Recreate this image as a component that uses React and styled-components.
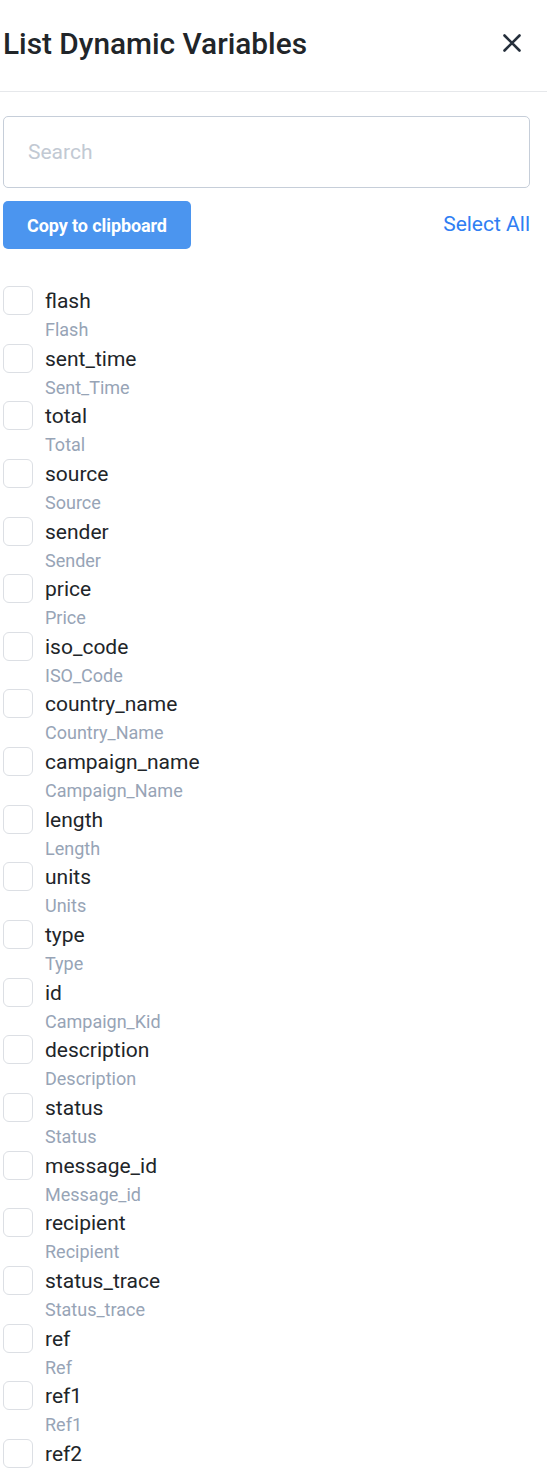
import { useState } from 'react'
import styled, { createGlobalStyle } from 'styled-components'

const GlobalStyle = createGlobalStyle`
  body {
    margin: 0;
    background: #fff;
    font-family: Roboto, "Liberation Sans", sans-serif;
    color: #212529;
  }
`

const Panel = styled.div`
  width: 547px;
  height: 1475px;
  overflow: hidden;
`

const Header = styled.div`
  height: 86px;
  padding: 0 26px 5px 3px;
  display: flex;
  align-items: center;
  justify-content: space-between;
  border-bottom: 1px solid #e6e8eb;
`

const Title = styled.h2`
  margin: 0;
  font-size: 29.8px;
  font-weight: 500;
  color: #212529;
`

const CloseButton = styled.button`
  border: 0;
  background: none;
  padding: 0;
  width: 18px;
  height: 18px;
  display: flex;
  cursor: pointer;
`

const Body = styled.div`
  padding: 24px 17px 0 3px;
`

const SearchInput = styled.input`
  box-sizing: border-box;
  width: 100%;
  height: 72px;
  border: 1px solid #c6ced9;
  border-radius: 5px;
  padding: 0 24px;
  font-family: inherit;
  font-size: 21px;
  color: #212529;
  outline: none;

  &::placeholder {
    color: #c2c9d3;
  }
`

const Actions = styled.div`
  display: flex;
  align-items: center;
  justify-content: space-between;
  margin-top: 13px;
`

const CopyButton = styled.button`
  height: 48px;
  width: 188px;
  border: 0;
  border-radius: 5px;
  background: #4b95ef;
  color: #fff;
  font-family: inherit;
  font-size: 18px;
  font-weight: 700;
  letter-spacing: -0.1px;
  cursor: pointer;
`

const SelectAll = styled.a`
  font-size: 21px;
  color: #2f7ef3;
  margin-top: -2px;
  cursor: pointer;
`

const List = styled.ul`
  list-style: none;
  margin: 37px 0 0;
  padding: 0;
`

const Row = styled.li`
  display: flex;
  gap: 12px;
  height: 57.65px;
`

const Box = styled.span`
  box-sizing: border-box;
  flex: none;
  width: 30px;
  height: 29px;
  border: 1px solid #dcdfe4;
  border-radius: 6px;
  background: ${p => (p.$checked ? '#4b95ef' : '#fff')};
  cursor: pointer;
`

const Texts = styled.div`
  display: flex;
  flex-direction: column;
  padding-top: 1px;
`

const Name = styled.span`
  font-size: 21px;
  line-height: 29px;
  color: #212529;
`

const Label = styled.span`
  font-size: 18px;
  line-height: 28px;
  color: #97a4b6;
`

const variables = [
  ['flash', 'Flash'],
  ['sent_time', 'Sent_Time'],
  ['total', 'Total'],
  ['source', 'Source'],
  ['sender', 'Sender'],
  ['price', 'Price'],
  ['iso_code', 'ISO_Code'],
  ['country_name', 'Country_Name'],
  ['campaign_name', 'Campaign_Name'],
  ['length', 'Length'],
  ['units', 'Units'],
  ['type', 'Type'],
  ['id', 'Campaign_Kid'],
  ['description', 'Description'],
  ['status', 'Status'],
  ['message_id', 'Message_id'],
  ['recipient', 'Recipient'],
  ['status_trace', 'Status_trace'],
  ['ref', 'Ref'],
  ['ref1', 'Ref1'],
  ['ref2', 'Ref2'],
]

const App = () => {
  const [checked, setChecked] = useState({})

  const toggle = (key) => setChecked({ ...checked, [key]: !checked[key] })

  return (
    <Panel>
      <GlobalStyle />
      <Header>
        <Title>List Dynamic Variables</Title>
        <CloseButton aria-label="Close">
          <svg width="18" height="18" viewBox="0 0 18 18">
            <path d="M1.5 1.5L16.5 16.5M16.5 1.5L1.5 16.5" stroke="#26303c" strokeWidth="2.6" strokeLinecap="round" />
          </svg>
        </CloseButton>
      </Header>
      <Body>
        <SearchInput placeholder="Search" />
        <Actions>
          <CopyButton>Copy to clipboard</CopyButton>
          <SelectAll>Select All</SelectAll>
        </Actions>
        <List>
          {variables.map(([key, label]) => (
            <Row key={key}>
              <Box $checked={checked[key]} onClick={() => toggle(key)} />
              <Texts>
                <Name>{key}</Name>
                <Label>{label}</Label>
              </Texts>
            </Row>
          ))}
        </List>
      </Body>
    </Panel>
  )
}

export default App
